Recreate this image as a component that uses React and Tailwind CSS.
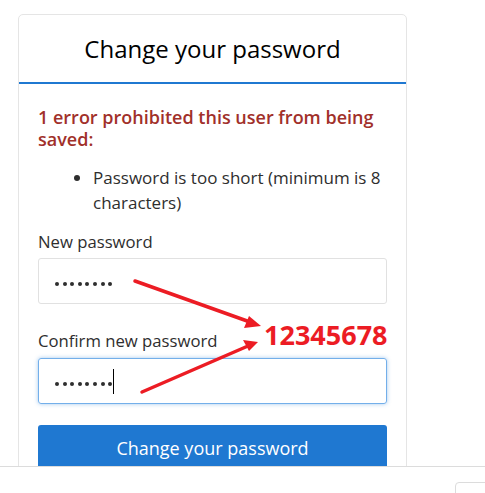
import React from "react";

function Dots() {
  return (
    <div className="flex gap-[3.6px] pt-[5px]">
      {[0, 1, 2, 3, 4, 5, 6, 7].map((i) => (
        <span key={i} className="block w-[4px] h-[4px] rounded-full bg-[#2e2e2e]" />
      ))}
    </div>
  );
}

export default function App() {
  const font = { fontFamily: '"Open Sans", "Noto Sans", sans-serif' };
  return (
    <div className="relative w-[485px] h-[493px] overflow-hidden bg-white" style={font}>
      <div className="pt-[14px] pl-[18px]">
        <div className="w-[389px] border border-[#e5e5e5] rounded-[5px] bg-white">
          <div className="h-[69px] flex items-center justify-center border-b-2 border-[#1f78d1]">
            <h3 className="text-[24px] text-black leading-none pt-[1px]">Change your password</h3>
          </div>
          <div className="px-[19px] pt-[22px]">
            <h4 className="text-[18px] font-semibold leading-[22px] text-[#a1302a]">
              1 error prohibited this user from being saved:
            </h4>
            <ul className="list-disc pl-[55px] mt-[15px] text-[17px] leading-[25px] text-[#2e2e2e]">
              <li>Password is too short (minimum is 8 characters)</li>
            </ul>
            <div className="mt-[14px]">
              <label className="block text-[16.7px] leading-[25px] text-[#2e2e2e]">New password</label>
              <div className="mt-[4px] h-[46px] border border-[#e1e1e1] rounded-[3px] flex items-center pl-[16px]">
                <Dots />
              </div>
            </div>
            <div className="mt-[24px]">
              <label className="block text-[16.7px] leading-[25px] text-[#2e2e2e]">Confirm new password</label>
              <div className="mt-[5px] h-[46px] border border-[#73afea] rounded-[3px] flex items-center pl-[16px] shadow-[0_0_4px_rgba(31,120,209,0.4)]">
                <Dots />
                <span className="inline-block w-[1px] h-[25px] bg-black ml-[1px] mt-[1px]" />
              </div>
            </div>
            <button className="mt-[21px] w-full h-[60px] bg-[#1f78d1] rounded-[3px] text-white text-[18px] flex justify-center pt-[10px]">
              Change your password
            </button>
          </div>
        </div>
      </div>

      <svg className="absolute left-0 top-0 pointer-events-none" width="485" height="493">
        <g stroke="#ec1c24" strokeWidth="3.5" strokeLinecap="round" fill="#ec1c24">
          <line x1="135" y1="281" x2="250" y2="322" />
          <line x1="142" y1="392" x2="248" y2="346" />
        </g>
        <polygon points="261,326 244,328 249,316" fill="#ec1c24" />
        <polygon points="258,342 243,340 249,351" fill="#ec1c24" />
      </svg>
      <div className="absolute left-[264px] top-[321px] text-[27px] font-bold leading-none text-[#ec1c24]">12345678</div>

      <div className="absolute left-0 right-0 top-[466px] bottom-0 bg-white border-t border-[#dcdcdc]">
        <div className="absolute left-[455px] top-[15px] w-[40px] h-[30px] border border-[#dcdcdc] rounded-[4px]" />
      </div>
    </div>
  );
}
